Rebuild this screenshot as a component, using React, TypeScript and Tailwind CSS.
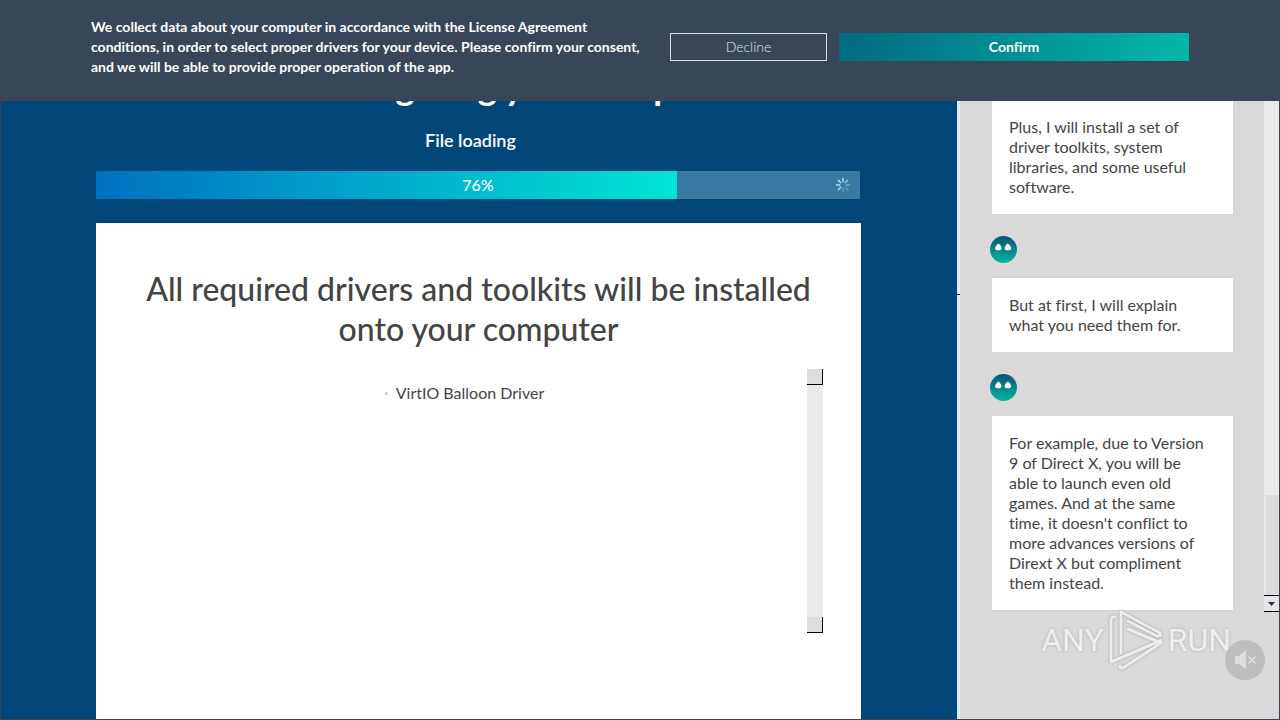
import type { ReactNode } from "react";

const PROGRESS = 76;

const drivers = ["VirtIO Balloon Driver"];

function Spinner() {
  const spokes = [0.8, 0.6, 0.45, 0.3, 0.3, 0.8, 0.9, 0.8];
  return (
    <svg viewBox="0 0 16 16" className="size-4" stroke="#d5ecf7" strokeWidth="1.5" strokeLinecap="round" aria-hidden="true">
      {spokes.map((opacity, i) => (
        <line key={i} x1="8" y1="1.5" x2="8" y2="4.8" opacity={opacity} transform={`rotate(${i * 45} 8 8)`} />
      ))}
    </svg>
  );
}

function BotAvatar() {
  return (
    <svg viewBox="0 0 27 27" className="-ml-0.5 mt-[22px] mb-[15px] block size-[27px]" role="img" aria-label="Assistant">
      <defs>
        <linearGradient id="bot" x1="0" y1="0" x2="0" y2="1">
          <stop offset="0" stopColor="#0a5276" />
          <stop offset="1" stopColor="#04b8a4" />
        </linearGradient>
      </defs>
      <circle cx="13.5" cy="13.5" r="13.5" fill="url(#bot)" />
      <path d="M8.4 7.400c1.600 1.100 3.200 3.300 3.200 5.100 0 1.100-1.300 1.800-3.200 1.800s-3.400-.7-3.400-1.800c0-1.800 1.800-4 3.400-5.100z" fill="#fff" />
      <path d="M17.800 7.400c1.600 1.100 3.400 3.300 3.400 5.100 0 1.100-1.500 1.800-3.400 1.800s-3.200-.7-3.200-1.800c0-1.800 1.600-4 3.200-5.100z" fill="#fff" />
    </svg>
  );
}

function Message({ children }: { children: ReactNode }) {
  return <p className="bg-white p-[17px] text-base leading-5 shadow-[0_0_2px_#cfcfcf]">{children}</p>;
}

function ConsentBanner() {
  return (
    <header className="absolute inset-x-0 top-0 z-10 flex h-[101px] items-start gap-3 bg-[#394659] px-[90px] text-sm text-white">
      <p className="mt-[17px] flex-1 font-bold leading-5">
        We collect data about your computer in accordance with the License Agreement
        <br />
        conditions, in order to select proper drivers for your device. Please confirm your consent,
        <br />
        and we will be able to provide proper operation of the app.
      </p>
      <button type="button" className="mt-[33px] h-7 w-[157px] border border-[#d5dbe2] font-light text-[#dfe5ec]">
        Decline
      </button>
      <button type="button" className="mt-[33px] h-7 w-[350px] bg-linear-to-r from-[#036b80] to-[#02b7a8] font-bold">
        Confirm
      </button>
    </header>
  );
}

function Watermark() {
  return (
    <div className="absolute right-12 bottom-12 flex items-center gap-1 font-[Roboto,sans-serif] text-[32px] leading-[62px] text-[#eeeeee] [text-shadow:0_0_3px_#aaaaaa]">
      <span>ANY</span>
      <svg viewBox="0 0 56 62" className="h-[62px] w-14 drop-shadow-[0_0_1px_#999999]" fill="none" strokeLinejoin="round" strokeLinecap="round" aria-hidden="true">
        <g stroke="#ececec" strokeWidth="3">
          <path d="M7 8Q3 7 3 12V53L53 31.500" />
          <path d="M13 44V3L52 24Q54 27.500 49 27L20 12" />
          <path d="M20 20 53 34 18 57Q12 61 12 57" />
        </g>
      </svg>
      <span>RUN</span>
    </div>
  );
}

function MuteButton() {
  return (
    <button type="button" aria-label="Unmute" className="absolute right-3.5 bottom-[39px] size-10 rounded-full bg-[#aaaaaa]/60">
      <svg viewBox="0 0 40 40" className="size-10" aria-hidden="true">
        <path d="M10 16h4l7-6v19l-7-5h-4z" fill="#dddddd" />
        <path d="m23.500 16.500 7 7m0-7-7 7" stroke="#e4e4e4" strokeWidth="1.500" />
      </svg>
    </button>
  );
}

export default function App() {
  return (
    <div className="relative flex h-screen overflow-hidden border border-t-0 border-[#394357] bg-[#014679] font-[Lato,sans-serif] text-[#444444] [font-variant-ligatures:none]">
      <ConsentBanner />

      <main className="flex min-w-0 flex-1 flex-col pr-24 pl-[95px] pt-[66px]">
        <h1 className="mr-6 text-center text-4xl font-bold leading-10 text-white">We are configuring your computer</h1>
        <p className="mt-[22px] mr-4 text-center text-lg font-semibold leading-6 text-white">File loading</p>

        <div
          role="progressbar"
          aria-label="File loading"
          aria-valuenow={PROGRESS}
          className="relative mt-[19px] mr-px h-7 shrink-0 bg-[#387aa1]"
        >
          <div className="h-full bg-linear-to-r from-[#0070c0] to-[#00e5d3]" style={{ width: `${PROGRESS}%` }} />
          <div className="absolute inset-0 flex items-center justify-center text-base font-medium text-white">{PROGRESS}%</div>
          <div className="absolute inset-y-0 right-[9px] flex items-center">
            <Spinner />
          </div>
        </div>

        <section className="mt-6 flex-1 bg-white pt-[46px]">
          <h2 className="text-center text-[32px] font-medium leading-10">
            All required drivers and toolkits will be installed
            <br />
            onto your computer
          </h2>
          <div className="mr-[38px] ml-[34px] mt-5 flex h-[264px]">
            <ul className="flex flex-1 flex-col items-center pt-3.5 text-base leading-5">
              {drivers.map((name) => (
                <li key={name} className="flex items-center gap-2 pr-2">
                  <span className="size-[3px] rounded-full bg-[#cfcfcf]" />
                  {name}
                </li>
              ))}
            </ul>
            <div className="flex w-4 flex-col justify-between bg-[#eaeaea]">
              <button type="button" aria-label="Scroll up" className="h-4 border-r border-b border-black bg-[#dddddd]" />
              <button type="button" aria-label="Scroll down" className="h-4 border-r border-b border-black bg-[#dddddd]" />
            </div>
          </div>
        </section>
      </main>

      <aside className="flex w-[322px] bg-[#d9d9d9]">
        <div className="flex w-[3px] flex-col bg-[#e3eaf0] pt-[294px]">
          <div className="h-px bg-black" />
        </div>
        <div className="flex-1 pr-[31px] pl-8 pt-[100px]">
          <Message>
            Plus, I will install a set of
            <br />
            driver toolkits, system
            <br />
            libraries, and some useful
            <br />
            software.
          </Message>
          <BotAvatar />
          <Message>
            But at first, I will explain
            <br />
            what you need them for.
          </Message>
          <BotAvatar />
          <Message>
            For example, due to Version
            <br />
            9 of Direct X, you will be
            <br />
            able to launch even old
            <br />
            games. And at the same
            <br />
            time, it doesn't conflict to
            <br />
            more advances versions of
            <br />
            Dirext X but compliment
            <br />
            them instead.
          </Message>
        </div>
        <div className="flex h-[612px] w-[15px] flex-col bg-[#eaeaea]">
          <div className="mt-[495px] ml-0.5 flex-1 bg-[#dcdcd8]" />
          <button type="button" aria-label="Scroll down" className="flex h-[17px] items-center justify-center border-y border-black bg-[#e6e6e8]">
            <svg viewBox="0 0 7 4" className="h-1 w-[7px]" aria-hidden="true">
              <path d="M0 0h7L3.500 4z" fill="#333333" />
            </svg>
          </button>
        </div>
      </aside>

      <Watermark />
      <MuteButton />
    </div>
  );
}
